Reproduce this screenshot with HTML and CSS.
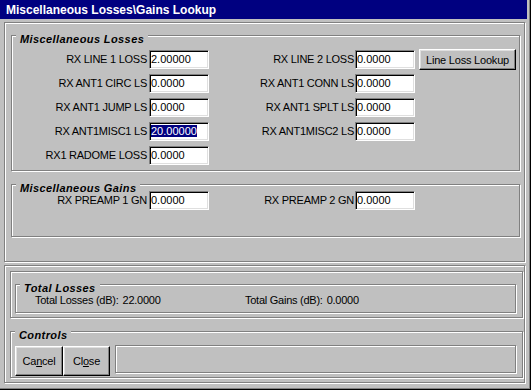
FILE: index.html
```html
<!DOCTYPE html>
<html>
<head>
<title>Miscellaneous Losses\Gains Lookup</title>
<link rel="stylesheet" href="styles.css">
</head>
<body>
  <div class="window">
    <div class="titlebar">Miscellaneous Losses\Gains Lookup</div>
    <div class="client">

      <div class="panel panel-top">
        <div class="group losses">
          <span class="group-title">Miscellaneous Losses</span>
          <div class="fields">
            <span class="lbl lbl-left">RX LINE 1 LOSS</span>
            <div class="field">2.00000</div>
            <span class="lbl lbl-right">RX LINE 2 LOSS</span>
            <div class="field">0.0000</div>
            <button class="btn lookup">Line Loss Lookup</button>

            <span class="lbl lbl-left">RX ANT1 CIRC LS</span>
            <div class="field">0.0000</div>
            <span class="lbl lbl-right">RX ANT1 CONN LS</span>
            <div class="field">0.0000</div>

            <span class="lbl lbl-left">RX ANT1 JUMP LS</span>
            <div class="field">0.0000</div>
            <span class="lbl lbl-right">RX ANT1 SPLT LS</span>
            <div class="field">0.0000</div>

            <span class="lbl lbl-left">RX ANT1MISC1 LS</span>
            <div class="field"><span class="sel">20.00000</span></div>
            <span class="lbl lbl-right">RX ANT1MISC2 LS</span>
            <div class="field">0.0000</div>

            <span class="lbl lbl-left">RX1 RADOME LOSS</span>
            <div class="field">0.0000</div>
          </div>
        </div>

        <div class="group gains">
          <span class="group-title">Miscellaneous Gains</span>
          <div class="fields">
            <span class="lbl lbl-left">RX PREAMP 1 GN</span>
            <div class="field">0.0000</div>
            <span class="lbl lbl-right">RX PREAMP 2 GN</span>
            <div class="field">0.0000</div>
          </div>
        </div>
      </div>

      <div class="panel panel-bottom">
        <div class="panel totals-frame">
          <div class="group totals">
            <span class="group-title">Total Losses</span>
            <div class="total-row">
              <span class="total">Total Losses (dB):<span class="value">22.0000</span></span>
              <span class="total">Total Gains (dB):<span class="value">0.0000</span></span>
            </div>
          </div>
        </div>

        <div class="group controls">
          <span class="group-title">Controls</span>
          <div class="control-row">
            <button class="btn cmd cancel">Ca<u>n</u>cel</button>
            <button class="btn cmd close">Cl<u>o</u>se</button>
            <div class="status"></div>
          </div>
        </div>
      </div>

    </div>
  </div>
</body>
</html>
```

FILE: styles.css
```css
* {
  box-sizing: border-box;
}

body {
  margin: 0;
  background: #c0c0c0;
  font-family: 'Liberation Sans', Arial, sans-serif;
  font-size: 11px;
  color: #000;
}

.window {
  width: 531px;
  height: 390px;
  padding: 0 4px 4px 0;
  box-shadow: inset -1px -1px 0 #000, inset -2px -2px 0 #808080; /* frame edge */
}

.titlebar {
  height: 19px;
  padding: 3px 0 0 6px;
  background: #000080;
  color: #fff;
  font-size: 12px;
  font-weight: bold;
  line-height: 15px;
  white-space: nowrap;
}

.client {
  padding: 3px 2px 0 4px;
}

/* etched 3d frames */
.panel,
.group {
  border: 1px solid #808080;
  box-shadow: inset 1px 1px 0 #fff, 1px 1px 0 #fff;
}

.group {
  position: relative;
}

.group-title {
  position: absolute;
  top: -3px;
  left: 4px;
  padding: 0 4px;
  background: #c0c0c0;
  font-weight: bold;
  font-style: italic;
  letter-spacing: 0.4px;
  line-height: 12px;
}

.panel-top {
  height: 240px;
  padding: 12px 4px 0 6px;
}

.losses {
  height: 136px;
  padding-top: 14px;
}

.gains {
  height: 53px;
  margin-top: 13px;
  padding-top: 6px;
}

.fields {
  display: grid;
  grid-template-columns: 137px 60px 146px 60px 101px;
  grid-auto-rows: 19px;
  row-gap: 5px;
}

.lbl {
  line-height: 19px;
  text-align: right;
  white-space: nowrap;
  letter-spacing: -0.25px;
}

.lbl-left {
  grid-column: 1;
  padding-right: 2px;
}

.lbl-right {
  grid-column: 3;
  padding-right: 1px;
}

.field {
  height: 19px;
  padding-left: 1px;
  background: #fff;
  border: 1px solid;
  border-color: #808080 #fff #fff #808080;
  box-shadow: inset 1px 1px 0 #000, inset -1px -1px 0 #dfdfdf;
  line-height: 17px;
  white-space: nowrap;
  overflow: hidden;
}

.sel {
  background: #000080;
  color: #fff;
}

.btn {
  padding: 0;
  font: inherit;
  color: #000;
  background: #c0c0c0;
  border: 1px solid;
  border-color: #fff #000 #000 #fff;
  box-shadow: inset -1px -1px 0 #808080, inset 1px 1px 0 #dfdfdf;
  letter-spacing: -0.2px;
}

.lookup {
  width: 97px;
  height: 21px;
  margin-left: 4px;
  margin-top: -1px;
}

.panel-bottom {
  height: 118px;
  margin-top: 3px;
  padding: 5px 0 0 5px;
}

.totals-frame {
  width: 513px;
  height: 47px;
  padding: 12px 0 0 4px;
}

.totals {
  width: 501px;
  height: 29px;
  padding: 9px 0 0 19px;
}

.total-row {
  display: flex;
  line-height: 13px;
  letter-spacing: -0.25px;
}

.total {
  width: 210px;
  white-space: nowrap;
}

.value {
  margin-left: 4px;
}

.controls {
  width: 513px;
  height: 47px;
  margin-top: 13px;
  padding: 14px 0 0 4px;
}

.control-row {
  display: flex;
  align-items: flex-start;
}

.cmd {
  height: 30px;
}

.cancel {
  width: 48px;
}

.close {
  width: 47px;
}

.status {
  width: 401px;
  height: 28px;
  margin: -1px 0 0 5px;
  border: 1px solid #808080;
  box-shadow: inset 1px 1px 0 #fff, 1px 1px 0 #fff;
}
```
